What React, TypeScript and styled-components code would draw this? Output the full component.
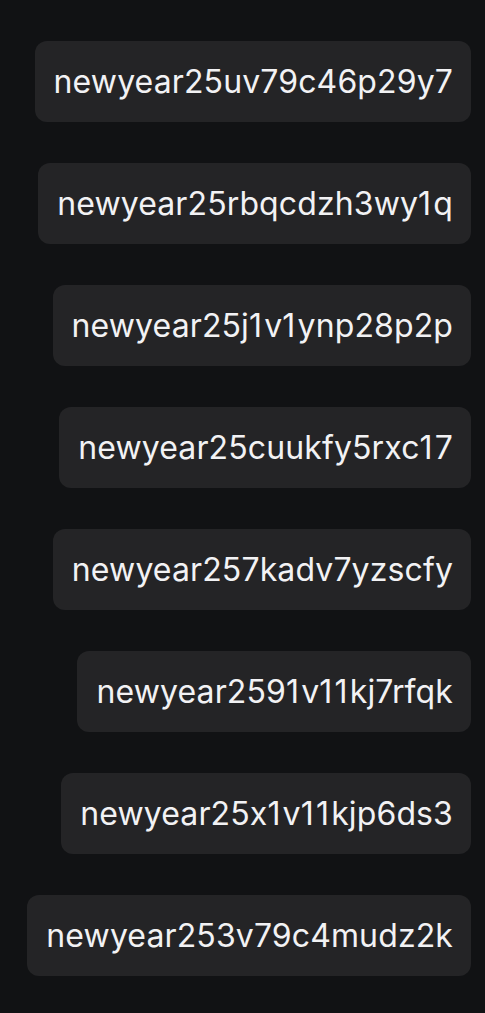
import React from "react";
import styled, { createGlobalStyle } from "styled-components";

const Global = createGlobalStyle`
  html, body { margin: 0; padding: 0; background: #111214; }
  body { font-family: Inter, "Noto Sans", sans-serif; }
`;

const List = styled.div`
  display: flex;
  flex-direction: column;
  align-items: flex-end;
  gap: 41px;
  padding: 41px 14px 0 0;
`;

const Bubble = styled.div`
  height: 81px;
  box-sizing: border-box;
  display: flex;
  align-items: center;
  padding: 0 18px 0 19px;
  background: #242426;
  border-radius: 12px;
  color: #f2f2f4;
  font-size: 32px;
  letter-spacing: 0.12px;
  font-feature-settings: "calt" 0;
  white-space: nowrap;
`;

const One = styled.span`
  letter-spacing: 2.2px;
`;

const codes = [
  "newyear25uv79c46p29y7",
  "newyear25rbqcdzh3wy1q",
  "newyear25j1v1ynp28p2p",
  "newyear25cuukfy5rxc17",
  "newyear257kadv7yzscfy",
  "newyear2591v11kj7rfqk",
  "newyear25x1v11kjp6ds3",
  "newyear253v79c4mudz2k",
];

function Code({ text }: { text: string }) {
  const parts = text.split(/(1)/);
  return (
    <>
      {parts.map((p, i) => (p === "1" ? <One key={i}>1</One> : p))}
    </>
  );
}

export default function App() {
  return (
    <>
      <Global />
      <List>
        {codes.map((c) => (
          <Bubble key={c}>
            <Code text={c} />
          </Bubble>
        ))}
      </List>
    </>
  );
}
